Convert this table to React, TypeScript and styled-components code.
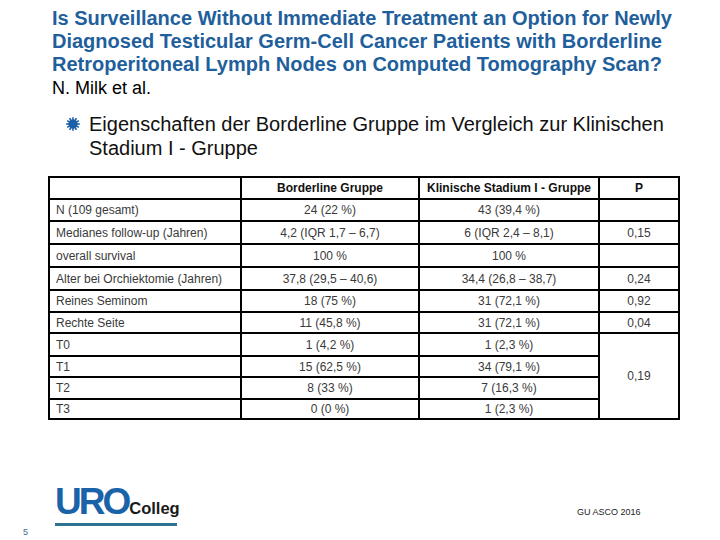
import React from "react";
import styled, { createGlobalStyle } from "styled-components";

const Global = createGlobalStyle`
  html, body { margin: 0; padding: 0; background: #fff; }
  body { font-family: "Liberation Sans", Arial, sans-serif; }
`;

const Page = styled.div`
  width: 720px;
  height: 540px;
  box-sizing: border-box;
  padding-top: 7px;
  display: flex;
  flex-direction: column;
  overflow: hidden;
`;

const Title = styled.h1`
  margin: 0 0 0 52px;
  font-size: 20px;
  line-height: 23px;
  font-weight: bold;
  color: #1f5f9c;
  white-space: nowrap;
`;

const Authors = styled.div`
  margin: 3px 0 0 52px;
  font-size: 18px;
  line-height: 19px;
  color: #000;
`;

const Bullet = styled.div`
  display: flex;
  align-items: flex-start;
  margin: 14px 0 0 66px;
  gap: 9px;
`;

const BulletMark = styled.svg`
  flex: none;
  width: 14px;
  height: 14px;
  margin-top: 5px;
`;

const BulletText = styled.div`
  font-size: 20px;
  line-height: 24px;
  color: #111;
  white-space: nowrap;
`;

const Table = styled.table`
  margin: 16px 0 0 48px;
  width: 630px;
  border-collapse: collapse;
  border: 2px solid #000;
  table-layout: fixed;
  font-size: 12px;
  color: #3a3a3a;
`;

const Row = styled.tr<{ $h: number }>`
  height: ${(p) => p.$h}px;
`;

const Th = styled.th`
  padding: 0;
  border: 2px solid #000;
  font-weight: bold;
  color: #111;
  text-align: center;
  white-space: nowrap;
`;

const Td = styled.td<{ $left?: boolean }>`
  padding: 0 ${(p) => (p.$left ? "6px" : "0")};
  border: 2px solid #000;
  text-align: ${(p) => (p.$left ? "left" : "center")};
  white-space: nowrap;
`;

const Footer = styled.div`
  margin-top: auto;
  position: relative;
  box-sizing: border-box;
  height: 75px;
  padding-top: 19px;
  display: flex;
  align-items: flex-start;
`;

const Logo = styled.div`
  margin: 0 0 0 55px;
  display: flex;
  flex-direction: column;
  width: 122px;
`;

const LogoRow = styled.div`
  display: flex;
  align-items: baseline;
  gap: 1px;
`;

const LogoUro = styled.span`
  font-size: 37px;
  line-height: 36px;
  font-weight: bold;
  color: #1b63a8;
  letter-spacing: -3px;
`;

const LogoColleg = styled.span`
  font-size: 16.5px;
  font-weight: bold;
  color: #1a1a1a;
`;

const LogoLine = styled.div`
  margin-top: 3px;
  height: 3px;
  background: #2d7390;
`;

const Source = styled.div`
  margin: 23px 0 0 400px;
  font-size: 9px;
  color: #222;
`;

const PageNo = styled.div`
  position: absolute;
  left: 23px;
  bottom: 3px;
  font-size: 9px;
  color: #3b6a90;
`;

const rows: [string, string, string, string | null, number][] = [
  ["N (109 gesamt)", "24 (22 %)", "43 (39,4 %)", "", 22],
  ["Medianes follow-up (Jahren)", "4,2 (IQR 1,7 – 6,7)", "6 (IQR 2,4 – 8,1)", "0,15", 23],
  ["overall survival", "100 %", "100 %", "", 23],
  ["Alter bei Orchiektomie (Jahren)", "37,8 (29,5 – 40,6)", "34,4 (26,8 – 38,7)", "0,24", 23],
  ["Reines Seminom", "18 (75 %)", "31 (72,1 %)", "0,92", 22],
  ["Rechte Seite", "11 (45,8 %)", "31 (72,1 %)", "0,04", 21],
  ["T0", "1 (4,2 %)", "1 (2,3 %)", "0,19", 23],
  ["T1", "15 (62,5 %)", "34 (79,1 %)", null, 21],
  ["T2", "8 (33 %)", "7 (16,3 %)", null, 22],
  ["T3", "0 (0 %)", "1 (2,3 %)", null, 20],
];

const Sun = () => (
  <BulletMark viewBox="0 0 14 14">
    {Array.from({ length: 12 }).map((_, i) => {
      const a = (i * Math.PI) / 6;
      return (
        <line
          key={i}
          x1={7}
          y1={7}
          x2={7 + 6.8 * Math.cos(a)}
          y2={7 + 6.8 * Math.sin(a)}
          stroke="#1b5fa6"
          strokeWidth={1.6}
        />
      );
    })}
    <circle cx={7} cy={7} r={4.6} fill="#1b5fa6" />
  </BulletMark>
);

export default function App() {
  return (
    <>
      <Global />
      <Page>
        <Title>
          Is Surveillance Without Immediate Treatment an Option for Newly
          <br />
          Diagnosed Testicular Germ-Cell Cancer Patients with Borderline
          <br />
          Retroperitoneal Lymph Nodes on Computed Tomography Scan?
        </Title>
        <Authors>N. Milk et al.</Authors>
        <Bullet>
          <Sun />
          <BulletText>
            Eigenschaften der Borderline Gruppe im Vergleich zur Klinischen
            <br />
            Stadium I - Gruppe
          </BulletText>
        </Bullet>
        <Table>
          <colgroup>
            <col style={{ width: 192 }} />
            <col style={{ width: 178 }} />
            <col style={{ width: 180 }} />
            <col style={{ width: 80 }} />
          </colgroup>
          <thead>
            <Row $h={22}>
              <Th />
              <Th>Borderline Gruppe</Th>
              <Th>Klinische Stadium I - Gruppe</Th>
              <Th>P</Th>
            </Row>
          </thead>
          <tbody>
            {rows.map(([a, b, c, p, h]) => (
              <Row key={a} $h={h}>
                <Td $left>{a}</Td>
                <Td>{b}</Td>
                <Td>{c}</Td>
                {p !== null && <Td rowSpan={a === "T0" ? 4 : 1}>{p}</Td>}
              </Row>
            ))}
          </tbody>
        </Table>
        <Footer>
          <Logo>
            <LogoRow>
              <LogoUro>URO</LogoUro>
              <LogoColleg>Colleg</LogoColleg>
            </LogoRow>
            <LogoLine />
          </Logo>
          <Source>GU ASCO 2016</Source>
          <PageNo>5</PageNo>
        </Footer>
      </Page>
    </>
  );
}
